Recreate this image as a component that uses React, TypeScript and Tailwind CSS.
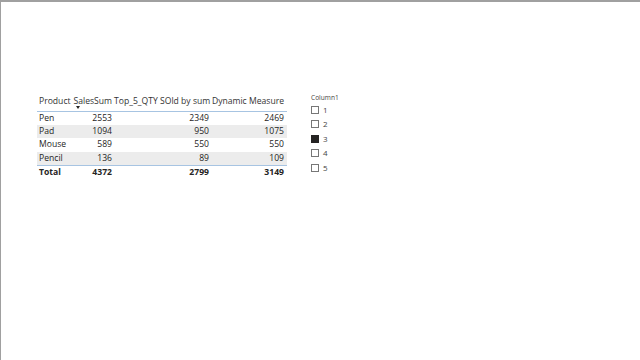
import React from 'react';

type Row = {
    product: string;
    sales: number;
    top5: number;
    dynamic: number;
};

const rows: Row[] = [
    { product: 'Pen', sales: 2553, top5: 2349, dynamic: 2469 },
    { product: 'Pad', sales: 1094, top5: 950, dynamic: 1075 },
    { product: 'Mouse', sales: 589, top5: 550, dynamic: 550 },
    { product: 'Pencil', sales: 136, top5: 89, dynamic: 109 },
];

const slicerItems = ['1', '2', '3', '4', '5'];

export default function App() {
    return (
        <div
            className="h-[360px] w-[640px] overflow-hidden border-t-2 border-l border-[#a0a0a0] bg-white text-[#252423]"
            style={{ fontFamily: '"Open Sans", "Noto Sans", sans-serif' }}
        >
            <div className="flex items-start gap-[24px] pt-[91px] pl-[36px]">
                {/* Tabel */}
                <table className="w-[250px] table-fixed border-collapse text-[8.6px] leading-none">
                    <colgroup>
                        <col className="w-[35px]" />
                        <col className="w-[42px]" />
                        <col className="w-[97px]" />
                        <col className="w-[76px]" />
                    </colgroup>
                    <thead>
                        <tr className="h-[18px] border-b border-[#a7c4e2] text-[#333]">
                            <th className="relative pl-[2px] text-left font-normal whitespace-nowrap">Product</th>
                            <th className="relative pr-[2px] text-right font-normal whitespace-nowrap">
                                SalesSum
                                <span className="absolute top-[13px] left-[4px] h-0 w-0 border-x-[2.5px] border-t-[3px] border-x-transparent border-t-[#252423]" />
                            </th>
                            <th className="pr-[2px] text-right font-normal whitespace-nowrap">Top_5_QTY SOld by sum</th>
                            <th className="pr-[3px] text-right font-normal whitespace-nowrap">Dynamic Measure</th>
                        </tr>
                    </thead>
                    <tbody>
                        {rows.map((r, i) => (
                            <tr key={r.product} className={`h-[13.5px] ${i % 2 === 1 ? 'bg-[#ececec]' : ''}`}>
                                <td className="pl-[2px] text-left">{r.product}</td>
                                <td className="pr-[2px] text-right">{r.sales}</td>
                                <td className="pr-[2px] text-right">{r.top5}</td>
                                <td className="pr-[3px] text-right">{r.dynamic}</td>
                            </tr>
                        ))}
                        <tr className="h-[14px] border-t border-[#a7c4e2] font-bold">
                            <td className="pl-[2px] text-left">Total</td>
                            <td className="pr-[2px] text-right">4372</td>
                            <td className="pr-[2px] text-right">2799</td>
                            <td className="pr-[3px] text-right">3149</td>
                        </tr>
                    </tbody>
                </table>

                {/* Slicer */}
                <div className="flex flex-col pt-[2px] leading-none text-[#444]">
                    <div className="mb-[4px] text-[6.6px]">Column1</div>
                    <div className="flex flex-col gap-[6.5px] text-[8px]">
                        {slicerItems.map((v) => (
                            <div key={v} className="flex h-[8px] items-center gap-[4px]">
                                <span
                                    className={`block h-[8px] w-[8px] border ${
                                        v === '3' ? 'border-[#252423] bg-[#252423]' : 'border-[#777] bg-white'
                                    }`}
                                />
                                <span>{v}</span>
                            </div>
                        ))}
                    </div>
                </div>
            </div>
        </div>
    );
}
